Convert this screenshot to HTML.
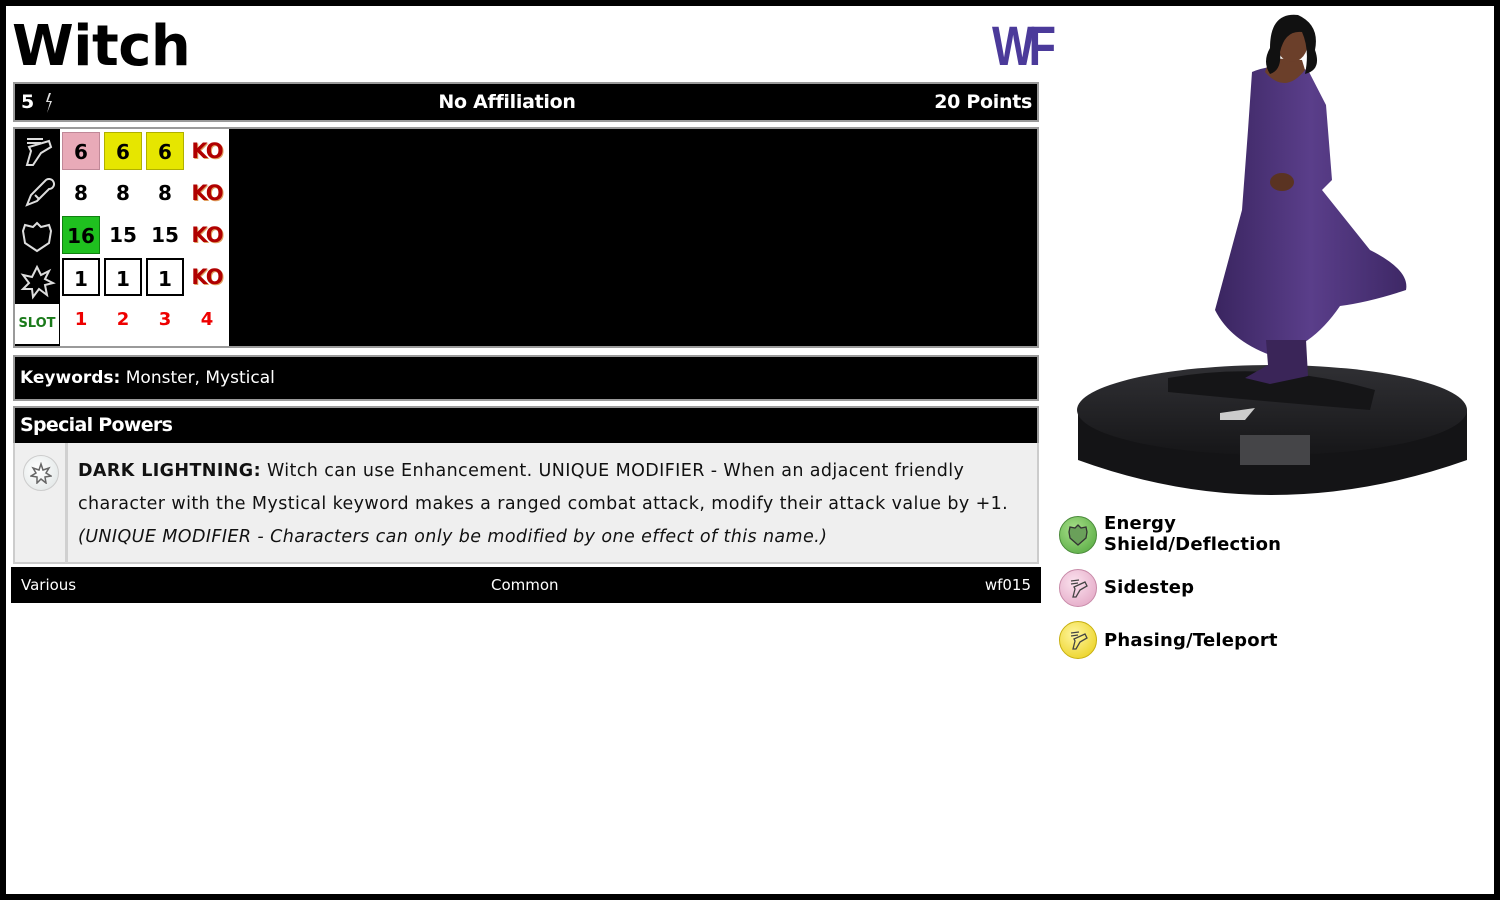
<!DOCTYPE html>
<html><head><meta charset="utf-8"><style>
*{margin:0;padding:0;box-sizing:border-box}
body{width:1500px;height:900px;background:#000;position:relative;overflow:hidden;font-family:"DejaVu Sans","Liberation Sans",sans-serif}
#pg{position:absolute;left:6px;top:6px;width:1488px;height:888px;background:#fff}
.a{position:absolute}
.bar{position:absolute;background:#000;border:2px solid #9a9a9a;color:#fff}
.cell{position:absolute;width:38px;height:38px;text-align:center;line-height:38px;font-weight:bold;font-size:20px;color:#000}
.ko{color:#b00000;font-size:21px;text-shadow:1px 1px 0 #e0a060;letter-spacing:-1px}
.sl{color:#e00;font-size:18px}
.lg{position:absolute;left:1104px;font-weight:bold;font-size:18px;color:#000;line-height:21px;letter-spacing:0.2px}
.ic{position:absolute;left:1059px;width:38px;height:38px;border-radius:50%}
</style></head><body>
<div id="pg"></div>
<div class="a" style="left:12px;top:14px;font-weight:bold;font-size:56px;line-height:66px;letter-spacing:-0.5px">Witch</div>
<div class="a" style="left:992px;top:16px;font-family:'Liberation Sans',sans-serif;font-weight:bold;font-size:56px;color:#4b3a9a;letter-spacing:-7px;transform:scaleX(0.8);transform-origin:left;line-height:60px">WF</div>

<div class="bar" style="left:13px;top:82px;width:1026px;height:40px;font-weight:bold;font-size:19px;line-height:36px;letter-spacing:-0.3px">
<span class="a" style="left:6px">5</span>
<svg class="a" style="left:28px;top:8px" width="12" height="22" viewBox="0 0 12 22"><path d="M6 1 L3 10 L7 10 L4 21 L9 9 L5 9 L8 1Z" fill="#ddd"/></svg>
<span class="a" style="left:0;width:984px;text-align:center">No Affiliation</span>
<span class="a" style="right:5px">20 Points</span></div>

<div class="bar" style="left:13px;top:127px;width:1026px;height:221px"></div>
<div class="a" style="left:60px;top:129px;width:169px;height:217px;background:#fff"></div>
<svg class="a" style="left:15px;top:129px" width="44" height="175" viewBox="0 0 44 175" fill="none" stroke="#ddd" stroke-width="2">
<path d="M12 10 L28 10 M12 14 L26 14 M14 18 L34 12 L36 18 L26 24 L18 36 L12 36 L16 22Z"/>
<path d="M30 52 a5 5 0 1 1 4 8 L22 72 L12 76 L16 66 L26 56Z M20 66 l4 4"/>
<path d="M22 94 l4 4 l8 -2 l2 6 l-2 12 l-12 8 l-12 -8 l-2 -12 l2 -6 l8 2z"/>
<path d="M22 138 l4 8 l8 -4 l-4 8 l8 4 l-8 2 l2 10 l-8 -6 l-6 8 l-1 -8 l-9 0 l6 -6 l-6 -8 l9 2z"/>
</svg>
<div class="a" style="left:15px;top:304px;width:44px;height:40px;background:#fff;color:#1a7a1a;font-weight:bold;font-size:13px;text-align:center;line-height:40px">SLOT</div>

<div class="cell" style="left:62px;top:132px;background:#e8aab8;border:1px solid #c08898">6</div>
<div class="cell" style="left:104px;top:132px;background:#e6e600;border:1px solid #b0b000">6</div>
<div class="cell" style="left:146px;top:132px;background:#e6e600;border:1px solid #b0b000">6</div>
<div class="cell ko" style="left:188px;top:132px">KO</div>
<div class="cell" style="left:62px;top:174px">8</div>
<div class="cell" style="left:104px;top:174px">8</div>
<div class="cell" style="left:146px;top:174px">8</div>
<div class="cell ko" style="left:188px;top:174px">KO</div>
<div class="cell" style="left:62px;top:216px;background:#1fc01f;border:1px solid #108010">16</div>
<div class="cell" style="left:104px;top:216px">15</div>
<div class="cell" style="left:146px;top:216px">15</div>
<div class="cell ko" style="left:188px;top:216px">KO</div>
<div class="cell" style="left:62px;top:258px;border:2px solid #000">1</div>
<div class="cell" style="left:104px;top:258px;border:2px solid #000">1</div>
<div class="cell" style="left:146px;top:258px;border:2px solid #000">1</div>
<div class="cell ko" style="left:188px;top:258px">KO</div>
<div class="cell sl" style="left:62px;top:301px">1</div>
<div class="cell sl" style="left:104px;top:301px">2</div>
<div class="cell sl" style="left:146px;top:301px">3</div>
<div class="cell sl" style="left:188px;top:301px">4</div>

<div class="bar" style="left:13px;top:355px;width:1026px;height:46px;font-size:17px;line-height:42px;padding-left:5px"><b>Keywords:</b> Monster, Mystical</div>
<div class="bar" style="left:13px;top:406px;width:1026px;height:37px;font-size:19px;font-weight:bold;line-height:34px;padding-left:5px;border-bottom:none;letter-spacing:-0.7px">Special Powers</div>
<div class="a" style="left:13px;top:443px;width:1026px;height:121px;background:#efefef;border:2px solid #ccc;border-top:none"></div>
<div class="a" style="left:65px;top:443px;width:3px;height:120px;background:#d0d0d0"></div>
<div class="a" style="left:23px;top:455px;width:36px;height:36px;border-radius:50%;background:radial-gradient(circle at 40% 40%,#fff,#dde3e3);border:1px solid #ccc"></div>
<svg class="a" style="left:30px;top:462px" width="22" height="22" viewBox="0 0 22 22"><path d="M11 2 l2 6 l6 -2 l-3 5 l5 3 l-6 1 l1 6 l-5 -4 l-4 4 l0 -6 l-6 -1 l5 -3 l-3 -5 l6 2z" fill="none" stroke="#666" stroke-width="1.5"/></svg>
<div class="a" style="left:78px;top:455px;width:945px;font-size:17.5px;line-height:33px;color:#111;letter-spacing:0.4px"><b>DARK LIGHTNING:</b> Witch can use Enhancement. UNIQUE MODIFIER - When an adjacent friendly character with the Mystical keyword makes a ranged combat attack, modify their attack value by +1.<br><i>(UNIQUE MODIFIER - Characters can only be modified by one effect of this name.)</i></div>

<div class="a" style="left:11px;top:567px;width:1030px;height:36px;background:#000;color:#fff;font-size:15px;line-height:36px">
<span class="a" style="left:10px">Various</span>
<span class="a" style="left:480px">Common</span>
<span class="a" style="right:10px">wf015</span></div>

<svg class="a" style="left:1070px;top:10px" width="410" height="500" viewBox="0 0 410 500">
<defs><linearGradient id="d" x1="0" x2="1"><stop offset="0" stop-color="#3a2560"/><stop offset=".5" stop-color="#5a3e8a"/><stop offset="1" stop-color="#3e2866"/></linearGradient>
<linearGradient id="b" x1="0" y1="0" x2="0" y2="1"><stop offset="0" stop-color="#303034"/><stop offset="1" stop-color="#161618"/></linearGradient></defs>
<path d="M8 400 L8 450 Q200 520 397 450 L397 400Z" fill="#141416"/>
<ellipse cx="202" cy="400" rx="195" ry="45" fill="url(#b)"/>
<path d="M98 368 Q200 350 305 380 L300 400 Q200 392 98 382Z" fill="#151517"/>
<rect x="170" y="425" width="70" height="30" fill="#454548"/>
<path d="M150 403 L185 398 L175 410 L150 410Z" fill="#ccc"/>
<path d="M182 62 Q205 52 238 60 L256 95 L262 170 L252 180 L300 240 Q340 260 336 280 Q300 292 270 296 Q240 340 200 345 Q160 330 145 300 L172 200 L178 120Z" fill="url(#d)"/>
<path d="M196 330 L198 355 L175 368 L200 374 L238 366 L236 330Z" fill="#3a2558"/>
<path d="M195 62 Q215 85 235 60 L232 50 L200 48Z" fill="#6b3f2a"/>
<ellipse cx="222" cy="32" rx="16" ry="20" fill="#6b3f2a"/>
<path d="M200 38 Q200 2 228 5 Q250 15 245 40 Q252 60 235 64 Q240 40 232 22 Q215 20 210 42 Q212 60 200 64 Q192 52 200 38Z" fill="#111"/>
<ellipse cx="212" cy="172" rx="12" ry="9" fill="#5a3322"/>
</svg>

<div class="ic" style="top:516px;background:radial-gradient(circle at 40% 35%,#a8e08a,#4ea43a);border:1px solid #4a8a3a"></div>
<svg class="a" style="left:1068px;top:524px" width="20" height="22" viewBox="0 0 20 22"><path d="M10 1 l3 3 l5 -1 l1 5 l-1 6 l-8 7 l-8 -7 l-1 -6 l1 -5 l5 1z" fill="#6aa05a" stroke="#333" stroke-width="1.3"/></svg>
<div class="lg" style="top:513px">Energy<br>Shield/Deflection</div>
<div class="ic" style="top:569px;background:radial-gradient(circle at 40% 35%,#fbe2ee,#e0a0c0);border:1px solid #c88aa8"></div>
<svg class="a" style="left:1068px;top:577px" width="22" height="22" viewBox="0 0 22 22"><path d="M3 4 L11 3 M3 7 L10 6 M6 10 L17 5 L19 9 L12 13 L8 20 L5 20 L7 12Z" fill="none" stroke="#444" stroke-width="1.3"/></svg>
<div class="lg" style="top:577px">Sidestep</div>
<div class="ic" style="top:621px;background:radial-gradient(circle at 40% 35%,#fff6a0,#e8cc10);border:1px solid #c8b010"></div>
<svg class="a" style="left:1068px;top:629px" width="22" height="22" viewBox="0 0 22 22"><path d="M3 4 L11 3 M3 7 L10 6 M6 10 L17 5 L19 9 L12 13 L8 20 L5 20 L7 12Z" fill="none" stroke="#444" stroke-width="1.3"/></svg>
<div class="lg" style="top:630px">Phasing/Teleport</div>
</body></html>
